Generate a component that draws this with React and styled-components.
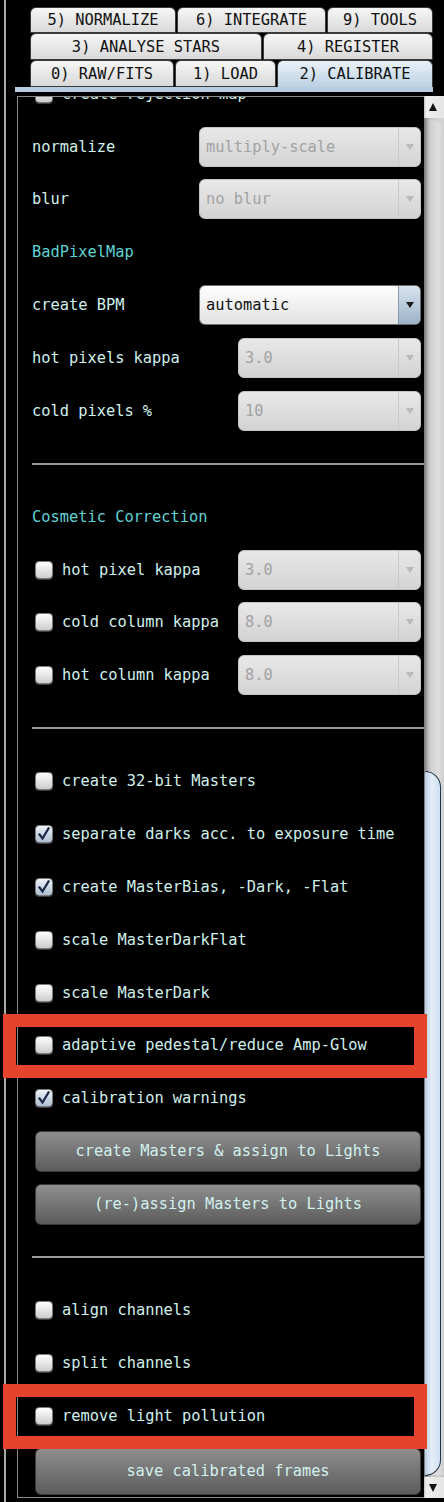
import React from 'react';
import styled, { createGlobalStyle, css } from 'styled-components';

const GlobalStyle = createGlobalStyle`
  html, body { margin: 0; padding: 0; background: #000; }
  body { font-family: "DejaVu Sans Mono", "Liberation Mono", monospace; }
`;

const ROW = 52.875;
const FONT = '"DejaVu Sans Mono", "Liberation Mono", monospace';
const FS = '15.35px';

const Screen = styled.div`
  width: 444px;
  height: 1502px;
  background: #000;
  overflow: hidden;
  display: flex;
  font-family: ${FONT};
`;

const Frame = styled.div`
  margin-left: 4px;
  border-left: 2px solid #a9a9a9;
  flex: 1;
  min-width: 0;
  display: flex;
  flex-direction: column;
`;

const TabArea = styled.div`
  padding: 7px 0 0 24px;
  width: 403px;
  display: flex;
  flex-direction: column;
`;

const TabRow = styled.div`
  display: flex;
  gap: 1px;
  height: ${(p) => p.$h}px;
`;

const Tab = styled.div`
  flex: 0 0 ${(p) => p.$w}px;
  box-sizing: border-box;
  border: 1px solid #3a3a3a;
  border-radius: 6px 6px 0 0;
  display: flex;
  align-items: center;
  justify-content: center;
  font-size: 15.4px;
  color: #111;
  white-space: pre;
  background: linear-gradient(#f6f6f6, #d9d9d9);
  ${(p) =>
    p.$selected &&
    css`
      background: linear-gradient(#eaf1f8, #bcd1e3);
      border-bottom: none;
    `}
`;

const Band = styled.div`
  margin-left: 9px;
  width: 418px;
  height: 5px;
  background: #b6cce0;
`;

const Body = styled.div`
  margin: 4px 0 4px 11px;
  flex: 1;
  min-height: 0;
  display: flex;
`;

const Panel = styled.div`
  flex: 1;
  min-width: 0;
  border: 1px solid #8a8a8a;
  border-right: none;
  display: flex;
  flex-direction: column;
`;

const Viewport = styled.div`
  flex: 1;
  min-height: 0;
  padding: 0 3px 0 14px;
  overflow-x: visible;
  overflow-y: clip;
  display: flex;
  flex-direction: column;
`;

const Content = styled.div`
  margin-top: -29.8px;
  flex-shrink: 0;
  display: flex;
  flex-direction: column;
`;

const Row = styled.div`
  position: relative;
  height: ${ROW}px;
  flex-shrink: 0;
  display: flex;
  align-items: center;
`;

const Label = styled.span`
  font-size: ${FS};
  color: ${(p) => (p.$header ? '#5fd3d3' : '#d0f0eb')};
  white-space: pre;
`;

const Divider = styled.div`
  flex: 1;
  margin-right: -3px;
  height: 2px;
  background: #9a9a9a;
`;

const SelectBox = styled.div`
  margin-left: auto;
  width: ${(p) => p.$w}px;
  height: 40px;
  box-sizing: border-box;
  border-radius: 6px;
  display: flex;
  overflow: hidden;
  font-size: ${FS};
  ${(p) =>
    p.$active
      ? css`
          background: linear-gradient(#fefefe, #e2e2e2);
          border: 1px solid #6c6c6c;
          color: #111;
        `
      : css`
          background: linear-gradient(#e8e8e8, #d3d3d3);
          border: 1px solid #c4c4c4;
          color: #a2a2a2;
        `}
`;

const SelectText = styled.div`
  flex: 1;
  display: flex;
  align-items: center;
  padding-left: 6px;
  white-space: pre;
`;

const SelectArrow = styled.div`
  width: 21px;
  display: flex;
  align-items: center;
  justify-content: center;
  ${(p) =>
    p.$active
      ? css`
          background: linear-gradient(#d8e4ef, #9cb3c9);
          border-left: 1px solid #8a9aab;
        `
      : css`
          border-left: 1px solid #c9c9c9;
        `}
  &::after {
    content: '';
    border-left: 4px solid transparent;
    border-right: 4px solid transparent;
    border-top: 6px solid ${(p) => (p.$active ? '#1c1c1c' : '#b9b9b9')};
  }
`;

const CheckBox = styled.div`
  width: 18px;
  height: 18px;
  box-sizing: border-box;
  margin: 0 9px 0 3px;
  border-radius: 4px;
  border: 1px solid #7c7c7c;
  box-shadow: 0 1px 0 #3c3c3c;
  flex-shrink: 0;
  display: flex;
  align-items: center;
  justify-content: center;
  background: ${(p) =>
    p.$checked ? 'linear-gradient(#eef3f9, #aebfd2)' : 'linear-gradient(#ffffff, #cdcdcd)'};
`;

const Button = styled.div`
  margin-left: 3px;
  flex: 1;
  height: ${(p) => p.$h || 41}px;
  margin-top: ${(p) => p.$mt || 0}px;
  box-sizing: border-box;
  border-radius: 6px;
  border: 1px solid #3a3a3a;
  background: linear-gradient(#8e8e8e, #5c5c5c);
  display: flex;
  align-items: center;
  justify-content: center;
  font-size: ${FS};
  color: #d2f1ee;
  white-space: pre;
`;

const Highlight = styled.div`
  position: absolute;
  left: -29px;
  width: 424px;
  top: calc(50% - 31.5px);
  height: 64.5px;
  box-sizing: border-box;
  border: 13px solid #e6432d;
  z-index: 5;
  pointer-events: none;
`;

const Scrollbar = styled.div`
  width: 20px;
  flex-shrink: 0;
  display: flex;
  flex-direction: column;
  background: #d2d2d2;
`;

const ScrollBtn = styled.div`
  height: ${(p) => p.$h}px;
  flex-shrink: 0;
  display: flex;
  align-items: center;
  justify-content: center;
  padding-right: 2px;
  background: linear-gradient(90deg, #bdbdbd 0, #eeeeee 2px, #e4e4e4 100%);
  &::after {
    content: '';
    border-left: 4.5px solid transparent;
    border-right: 4.5px solid transparent;
    ${(p) =>
      p.$down
        ? css`border-top: 8px solid #111;`
        : css`border-bottom: 8px solid #111;`}
  }
`;

const Track = styled.div`
  flex: 1;
  min-height: 0;
  border-left: 1px solid #7d7d7d;
  border-top-right-radius: 14px;
  box-shadow: inset 2px 0 3px rgba(0, 0, 0, 0.25);
  background: linear-gradient(90deg, #b2b2b2 0, #cfcfcf 30%, #dedede 70%, #d0d0d0 100%);
  display: flex;
  flex-direction: column;
`;

const Thumb = styled.div`
  margin-top: ${(p) => p.$top}px;
  height: ${(p) => p.$h}px;
  margin-right: 3px;
  box-sizing: border-box;
  border-top: 1.5px solid #26364a;
  border-right: 1.5px solid #26364a;
  border-bottom: 1.5px solid #26364a;
  border-radius: 0 16px 16px 0;
  background: linear-gradient(90deg, #b9cfe4 0, #e4eff8 45%, #cfe0ef 100%);
`;

const Check = () => (
  <svg width="14" height="14" viewBox="0 0 14 14">
    <path d="M2.5 7.5 L5.5 11.5 L11.5 1.5" fill="none" stroke="#1d2b48" strokeWidth="2.3" strokeLinecap="square" />
  </svg>
);

const tabs = [
  { h: 26, items: [['5) NORMALIZE', 146], ['6) INTEGRATE', 149], ['9) TOOLS', 106]] },
  { h: 27, items: [['3) ANALYSE STARS', 232], ['4) REGISTER', 170]] },
  { h: 27, items: [['0) RAW/FITS', 144], ['1) LOAD', 101], ['2) CALIBRATE', 156, true]] },
];

const rows = [
  { t: 'check', label: 'create rejection map' },
  { t: 'select', label: 'normalize', value: 'multiply-scale', w: 222 },
  { t: 'select', label: 'blur', value: 'no blur', w: 222 },
  { t: 'header', label: 'BadPixelMap' },
  { t: 'select', label: 'create BPM', value: 'automatic', w: 222, active: true },
  { t: 'select', label: 'hot pixels kappa', value: '3.0', w: 183 },
  { t: 'select', label: 'cold pixels %', value: '10', w: 183 },
  { t: 'divider' },
  { t: 'header', label: 'Cosmetic Correction' },
  { t: 'checkselect', label: 'hot pixel kappa', value: '3.0', w: 183 },
  { t: 'checkselect', label: 'cold column kappa', value: '8.0', w: 183 },
  { t: 'checkselect', label: 'hot column kappa', value: '8.0', w: 183 },
  { t: 'divider' },
  { t: 'check', label: 'create 32-bit Masters' },
  { t: 'check', label: 'separate darks acc. to exposure time', checked: true },
  { t: 'check', label: 'create MasterBias, -Dark, -Flat', checked: true },
  { t: 'check', label: 'scale MasterDarkFlat' },
  { t: 'check', label: 'scale MasterDark' },
  { t: 'check', label: 'adaptive pedestal/reduce Amp-Glow', mark: true },
  { t: 'check', label: 'calibration warnings', checked: true },
  { t: 'button', label: 'create Masters & assign to Lights' },
  { t: 'button', label: '(re-)assign Masters to Lights' },
  { t: 'divider' },
  { t: 'check', label: 'align channels' },
  { t: 'check', label: 'split channels' },
  { t: 'check', label: 'remove light pollution', mark: true },
  { t: 'button', label: 'save calibrated frames', h: 47, mt: 6 },
];

const Select = ({ value, w, active }) => (
  <SelectBox $w={w} $active={active}>
    <SelectText>{value}</SelectText>
    <SelectArrow $active={active} />
  </SelectBox>
);

const renderRow = (r, i) => {
  let inner = null;
  switch (r.t) {
    case 'check':
      inner = (
        <>
          <CheckBox $checked={r.checked}>{r.checked && <Check />}</CheckBox>
          <Label>{r.label}</Label>
        </>
      );
      break;
    case 'select':
      inner = (
        <>
          <Label>{r.label}</Label>
          <Select value={r.value} w={r.w} active={r.active} />
        </>
      );
      break;
    case 'checkselect':
      inner = (
        <>
          <CheckBox />
          <Label>{r.label}</Label>
          <Select value={r.value} w={r.w} />
        </>
      );
      break;
    case 'header':
      inner = <Label $header>{r.label}</Label>;
      break;
    case 'divider':
      inner = <Divider />;
      break;
    case 'button':
      inner = (
        <Button $h={r.h} $mt={r.mt}>
          {r.label}
        </Button>
      );
      break;
    default:
      break;
  }
  return (
    <Row key={i}>
      {inner}
      {r.mark && <Highlight />}
    </Row>
  );
};

export default function App() {
  return (
    <>
      <GlobalStyle />
      <Screen>
        <Frame>
          <TabArea>
            {tabs.map((row, ri) => (
              <TabRow key={ri} $h={row.h}>
                {row.items.map(([label, w, sel]) => (
                  <Tab key={label} $w={w} $selected={sel}>
                    {label}
                  </Tab>
                ))}
              </TabRow>
            ))}
          </TabArea>
          <Band />
          <Body>
            <Panel>
              <Viewport>
                <Content>{rows.map(renderRow)}</Content>
              </Viewport>
            </Panel>
            <Scrollbar>
              <ScrollBtn $h={22} />
              <Track>
                <Thumb $top={653} $h={705} />
              </Track>
              <ScrollBtn $h={21} $down />
            </Scrollbar>
          </Body>
        </Frame>
      </Screen>
    </>
  );
}
